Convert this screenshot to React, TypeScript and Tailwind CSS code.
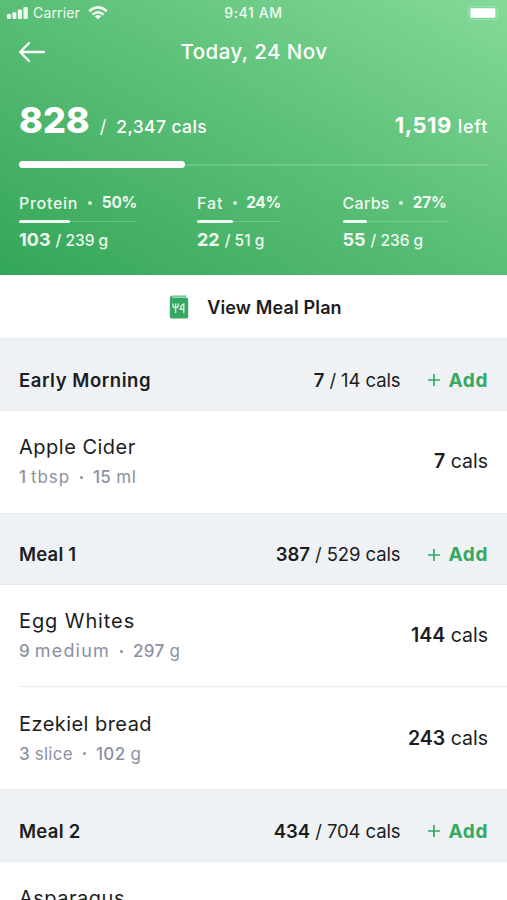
import React from 'react';

interface Food {
  name: string;
  nameClass: string;
  qty: string;
  unit: string;
  unitClass: string;
  weight: string;
  weightUnit: string;
  cals: number;
}

interface Meal {
  title: string;
  titleClass: string;
  eaten: number;
  target: number;
  foods: Food[];
}

interface Macro {
  label: string;
  labelClass: string;
  percent: number;
  current: number;
  target: number;
  barClass: string;
  fill: number;
}

const macros: Macro[] = [
  { label: 'Protein', labelClass: 'text-[16px] tracking-[0.7px]', percent: 50, current: 103, target: 239, barClass: 'w-[118px] mr-[60px]', fill: 43 },
  { label: 'Fat', labelClass: 'text-[16px] tracking-[0.9px]', percent: 24, current: 22, target: 51, barClass: 'w-[84px] mr-[61.5px]', fill: 43 },
  { label: 'Carbs', labelClass: 'text-[16px] tracking-[0.3px]', percent: 27, current: 55, target: 236, barClass: 'w-[104px]', fill: 24 }
];

const meals: Meal[] = [
  {
    title: 'Early Morning',
    titleClass: 'tracking-[0.55px]',
    eaten: 7,
    target: 14,
    foods: [
      { name: 'Apple Cider', nameClass: 'tracking-[0.5px]', qty: '1', unit: 'tbsp', unitClass: 'tracking-[0.9px]', weight: '15', weightUnit: 'ml', cals: 7 }
    ]
  },
  {
    title: 'Meal 1',
    titleClass: 'tracking-[0.2px]',
    eaten: 387,
    target: 529,
    foods: [
      { name: 'Egg Whites', nameClass: 'tracking-[0.9px]', qty: '9', unit: 'medium', unitClass: 'text-[18px] tracking-[1.2px]', weight: '297', weightUnit: 'g', cals: 144 },
      { name: 'Ezekiel bread', nameClass: 'tracking-[0.45px]', qty: '3', unit: 'slice', unitClass: 'tracking-[0.3px]', weight: '102', weightUnit: 'g', cals: 243 }
    ]
  },
  {
    title: 'Meal 2',
    titleClass: 'tracking-[0.3px]',
    eaten: 434,
    target: 704,
    foods: [
      { name: 'Asparagus', nameClass: 'tracking-[0.5px]', qty: '6', unit: 'spears', unitClass: 'tracking-[0.4px]', weight: '96', weightUnit: 'g', cals: 21 }
    ]
  }
];

const StatusBar: React.FC = () => (
  <div className="grid h-[26px] grid-cols-3 items-center px-[7px] pb-px text-[14px] text-white/90">
    <div className="flex items-center">
      <svg width="22" height="13" viewBox="0 0 22 13" fill="currentColor">
        <rect x="0" y="8" width="4" height="5" rx="1" />
        <rect x="5.4" y="6.2" width="4" height="6.8" rx="1" />
        <rect x="10.8" y="3.5" width="4.2" height="9.5" rx="1" />
        <rect x="16.4" y="1" width="4.4" height="12" rx="1" />
      </svg>
      <span className="ml-[4px] tracking-[0.15px]">Carrier</span>
      <svg className="ml-[8px]" width="20" height="14" viewBox="0 0 20 14" fill="none" stroke="currentColor" strokeWidth="2.5">
        <path d="M1.2 5.2 Q10 -2.4 18.8 5.2" />
        <path d="M4.4 8.6 Q10 3.8 15.6 8.6" />
        <path d="M10 13.2 L6.6 10.2 Q10 7.6 13.4 10.2 Z" fill="currentColor" stroke="none" />
      </svg>
    </div>
    <div className="text-center font-medium tracking-[0.6px]">9:41 AM</div>
    <div className="flex justify-end">
      <svg width="33" height="15" viewBox="0 0 33 15" fill="none">
        <rect x="1.4" y="1.4" width="29" height="13" rx="3" stroke="white" strokeOpacity="0.25" />
        <rect x="3.4" y="3.2" width="25" height="9.6" rx="1" fill="white" />
        <path d="M31.6 5.6 Q33 7.7 31.6 9.8 Z" fill="white" fillOpacity="0.4" />
      </svg>
    </div>
  </div>
);

const MacroStat: React.FC<{ macro: Macro }> = ({ macro }) => (
  <div className={`${macro.barClass} shrink-0 whitespace-nowrap text-[15.5px] text-white/90`}>
    <div className="flex h-[20px] items-center justify-between font-medium">
      <span className={macro.labelClass}>{macro.label}</span>
      <span className="size-[4px] rounded-full bg-white/80"></span>
      <span className="font-bold tracking-[-0.3px]">{macro.percent}%</span>
    </div>
    <div className="mt-[7px] h-[3px] pt-px">
      <div className="h-px bg-white/20">
        <div className="relative -top-px h-[3px] rounded-full bg-white/90" style={{ width: `${macro.fill}%` }}></div>
      </div>
    </div>
    <div className="mt-[3px] flex h-[26px] items-baseline gap-[5px] font-medium">
      <span className="text-[18px] font-bold">{macro.current}</span>
      <span>/ {macro.target} g</span>
    </div>
  </div>
);

const FoodRow: React.FC<{ food: Food; divided: boolean }> = ({ food, divided }) => (
  <div className="flex h-[102px] items-stretch pl-[19px]">
    <div className={`flex grow items-center justify-between pt-px pr-[19px] ${divided ? 'border-b border-[#ebecee]' : ''}`}>
      <div>
        <div className={`text-[20px] leading-[30px] ${food.nameClass}`}>{food.name}</div>
        <div className="flex items-center text-[17px] leading-[30px] text-[#8a91a3]">
          <span className="font-medium">{food.qty}</span>
          <span className={`ml-[5px] ${food.unitClass}`}>{food.unit}</span>
          <span className="mx-[10px] size-[3px] rounded-full bg-[#8a91a3]"></span>
          <span className="font-medium tracking-[0.3px]">{food.weight}</span>
          <span className="ml-[5px] tracking-[0.7px]">{food.weightUnit}</span>
        </div>
      </div>
      <div className="text-[19.5px]">
        <span className="font-semibold">{food.cals}</span> <span>cals</span>
      </div>
    </div>
  </div>
);

const MealSection: React.FC<{ meal: Meal }> = ({ meal }) => (
  <section>
    <div className="flex h-[72.5px] items-center border-y border-[#e8eaed] bg-[#eef2f5] px-[19px] pt-[13px] text-[18.5px]">
      <h2 className={`grow font-semibold ${meal.titleClass}`}>{meal.title}</h2>
      <div className="flex gap-[5px]">
        <span className="font-semibold">{meal.eaten}</span>
        <span className="tracking-[-0.1px]">/ {meal.target} cals</span>
      </div>
      <button className="ml-[28px] flex items-center font-bold text-[#35a861]">
        <svg className="mb-px" width="12" height="12" viewBox="0 0 12 12" stroke="currentColor" strokeWidth="1.7">
          <path d="M6 0 V12 M0 6 H12" />
        </svg>
        <span className="ml-[8px] text-[19px] tracking-[0.6px]">Add</span>
      </button>
    </div>
    {meal.foods.map((food, index) => (
      <FoodRow key={food.name} food={food} divided={index < meal.foods.length - 1} />
    ))}
  </section>
);

export default function App() {
  return (
    <div className="h-[900px] w-[507px] overflow-hidden bg-white font-['Inter',sans-serif] text-[#1b1d21]">
      <header className="h-[275px] bg-linear-to-tr from-[#33a657] via-[#59be76] to-[#84da99] text-white">
        <StatusBar />
        <div className="grid h-[52px] grid-cols-[40px_1fr_40px] items-center px-[19px]">
          <svg width="26" height="20" viewBox="0 0 26 20" fill="none" stroke="currentColor" strokeWidth="2.3" strokeLinecap="round" strokeLinejoin="round">
            <path d="M25 10 H1.2 M10 1 L1.2 10 L10 19" />
          </svg>
          <h1 className="pl-px text-center text-[20.5px] font-medium tracking-[0.45px]">Today, 24 Nov</h1>
        </div>
        <div className="mt-[15px] flex h-[46px] items-baseline px-[19px] font-medium">
          <span className="text-[36px] font-extrabold">828</span>
          <span className="ml-[10px] text-[18px] font-normal">/</span>
          <span className="ml-[10px] grow text-[17.5px] tracking-[0.4px]">2,347 cals</span>
          <span className="text-[22px] font-bold tracking-[0.5px]">1,519</span>
          <span className="ml-[6px] text-[18px] tracking-[0.7px]">left</span>
        </div>
        <div className="mx-[19px] mt-[22px] flex h-[7px] items-center">
          <div className="h-[7px] w-[166px] rounded-full bg-white"></div>
          <div className="h-[2px] grow bg-white/15"></div>
        </div>
        <div className="mt-[25px] flex px-[19px]">
          {macros.map(macro => (
            <MacroStat key={macro.label} macro={macro} />
          ))}
        </div>
      </header>

      <button className="flex h-[63px] w-full items-center justify-center pl-[4px]">
        <svg className="mr-[18px]" width="20" height="24" viewBox="0 0 20 24" fill="none">
          <path d="M2.5 1.2 H17.5" stroke="#35a861" strokeOpacity="0.7" strokeWidth="1.5" />
          <path d="M0.8 3 Q1 0.8 3 0.8 V4 H0.8 Z" fill="#35a861" />
          <rect x="0.8" y="2.6" width="18.4" height="21" rx="2.6" fill="#35a861" />
          <path d="M4 8.6 V10.2 Q4 12.8 6.6 12.8 Q9.2 12.8 9.2 10.2 V8.6 M6.6 8.6 V18 M14.8 18 V9 Q11.3 10.5 11.3 14.3 H14.8" stroke="white" strokeOpacity="0.8" strokeWidth="1.4" />
        </svg>
        <span className="pt-px text-[18px] font-semibold tracking-[0.15px]">View Meal Plan</span>
      </button>

      {meals.map(meal => (
        <MealSection key={meal.title} meal={meal} />
      ))}
    </div>
  );
}
